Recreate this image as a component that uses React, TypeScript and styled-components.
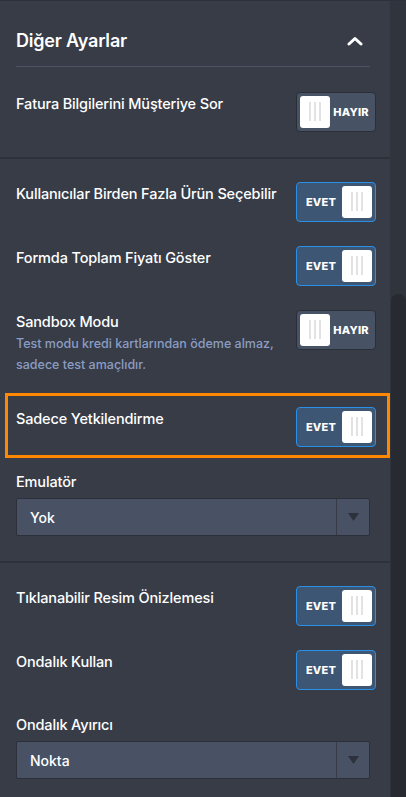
import styled, { createGlobalStyle } from "styled-components";

const GlobalStyle = createGlobalStyle`
  html, body {
    margin: 0;
    padding: 0;
    background: #373c47;
  }
  body {
    font-family: Inter, "Noto Sans", sans-serif;
    -webkit-font-smoothing: antialiased;
  }
`;

type ToggleProps = { on: boolean };

const Toggle = ({ on }: ToggleProps): JSX.Element => {
  return (
    <ToggleBox $on={on}>
      {on && <ToggleLabel>EVET</ToggleLabel>}
      <Knob>
        <Grip />
        <Grip />
        <Grip />
      </Knob>
      {!on && <ToggleLabel>HAYIR</ToggleLabel>}
    </ToggleBox>
  );
};

const Select = ({ value }: { value: string }): JSX.Element => {
  return (
    <SelectBox>
      <SelectValue>{value}</SelectValue>
      <SelectArrow>
        <svg width="11" height="8" viewBox="0 0 11 8">
          <path d="M0 0 L11 0 L5.5 8 Z" fill="#2c313b" />
        </svg>
      </SelectArrow>
    </SelectBox>
  );
};

const App = (): JSX.Element => {
  return (
    <>
      <GlobalStyle />
      <Page>
        <Panel>
          <Header>
            <Title>Diğer Ayarlar</Title>
            <svg width="16" height="10" viewBox="0 0 16 10">
              <polyline
                points="2,8 8,2.5 14,8"
                fill="none"
                stroke="#fff"
                strokeWidth="3"
                strokeLinecap="round"
                strokeLinejoin="round"
              />
            </svg>
          </Header>
          <Section $first>
            <Row>
              <Label>Fatura Bilgilerini Müşteriye Sor</Label>
              <Toggle on={false} />
            </Row>
          </Section>

          <Section>
            <Row>
              <Label>Kullanıcılar Birden Fazla Ürün Seçebilir</Label>
              <Toggle on />
            </Row>
            <Row>
              <Label>Formda Toplam Fiyatı Göster</Label>
              <Toggle on />
            </Row>
            <Row>
              <LabelGroup>
                <Label>Sandbox Modu</Label>
                <Description>
                  Test modu kredi kartlarından ödeme almaz, sadece test
                  amaçlıdır.
                </Description>
              </LabelGroup>
              <Toggle on={false} />
            </Row>
            <Row $highlight>
              <Label>Sadece Yetkilendirme</Label>
              <Toggle on />
            </Row>
            <Field>
              <Label>Emulatör</Label>
              <Select value="Yok" />
            </Field>
          </Section>

          <Section>
            <Row>
              <Label>Tıklanabilir Resim Önizlemesi</Label>
              <Toggle on />
            </Row>
            <Row>
              <Label>Ondalık Kullan</Label>
              <Toggle on />
            </Row>
            <Field>
              <Label>Ondalık Ayırıcı</Label>
              <Select value="Nokta" />
            </Field>
          </Section>
        </Panel>
        <ScrollTrack>
          <ScrollThumb />
        </ScrollTrack>
      </Page>
    </>
  );
};

const Page = styled.div`
  display: flex;
  width: 406px;
  height: 797px;
  overflow: hidden;
  border-top: 1px solid #2c3038;
`;

const Panel = styled.div`
  width: 390px;
  flex-shrink: 0;
  background: #373c47;
`;

const Header = styled.div`
  display: flex;
  align-items: center;
  justify-content: space-between;
  margin: 0 20px 0 16px;
  padding: 28px 7px 13px 0;
  border-bottom: 1px solid #4b5366;
`;

const Title = styled.h2`
  margin: 0;
  font-size: 18px;
  line-height: 24px;
  font-weight: 600;
  color: #ffffff;
  letter-spacing: -0.2px;
`;

const Section = styled.div<{ $first?: boolean }>`
  padding: ${({ $first }) => ($first ? "13px 0 13px" : "11px 0 12px")};
  border-bottom: 2px solid #2d3139;
`;

const Row = styled.div<{ $highlight?: boolean }>`
  position: relative;
  display: flex;
  align-items: flex-start;
  justify-content: space-between;
  gap: 12px;
  padding: 12px 14px 12px 16px;

  ${({ $highlight }) =>
    $highlight &&
    `
    &::after {
      content: "";
      position: absolute;
      top: -2px;
      bottom: 1px;
      left: 5px;
      right: 0;
      border: 3px solid #ff8800;
      pointer-events: none;
    }
  `}
`;

const LabelGroup = styled.div`
  flex: 1;
  padding-bottom: 8px;
`;

const Field = styled.div`
  display: flex;
  flex-direction: column;
  gap: 6px;
  padding: 11px 20px 13px 16px;
`;

const Label = styled.div`
  padding-top: 2px;
  font-size: 14.5px;
  line-height: 20px;
  font-weight: 500;
  color: #ffffff;
  letter-spacing: -0.15px;
`;

const Description = styled.div`
  margin-top: 1px;
  max-width: 272px;
  font-size: 12.5px;
  line-height: 21px;
  font-weight: 500;
  color: #8b9cc2;
`;

const ToggleBox = styled.div<{ $on: boolean }>`
  flex-shrink: 0;
  display: flex;
  align-items: center;
  box-sizing: border-box;
  width: 80px;
  height: 40px;
  padding: 0 3px;
  border-radius: 4px;
  border: ${({ $on }) => ($on ? "1px solid #2a8fe6" : "1px solid #2a2e36")};
  background: ${({ $on }) => ($on ? "#3c5674" : "#485265")};
`;

const ToggleLabel = styled.span`
  flex: 1;
  text-align: center;
  font-size: 11px;
  font-weight: 800;
  color: #ffffff;
  letter-spacing: 0.2px;
`;

const Knob = styled.div`
  display: flex;
  justify-content: center;
  gap: 3.5px;
  box-sizing: border-box;
  width: 30px;
  height: 32px;
  padding-top: 6px;
  border-radius: 3px;
  background: #ffffff;
`;

const Grip = styled.span`
  width: 1.5px;
  height: 19px;
  background: #e2e2e2;
`;

const SelectBox = styled.div`
  display: flex;
  height: 38px;
  box-sizing: border-box;
  border: 1px solid #2b3039;
  border-radius: 2px;
  background: #485264;
`;

const SelectValue = styled.div`
  flex: 1;
  display: flex;
  align-items: center;
  padding-left: 13px;
  font-size: 14px;
  font-weight: 500;
  color: #ffffff;
`;

const SelectArrow = styled.div`
  width: 32px;
  display: flex;
  align-items: center;
  justify-content: center;
  border-left: 1px solid #363b46;
`;

const ScrollTrack = styled.div`
  flex: 1;
  display: flex;
  flex-direction: column;
  justify-content: flex-end;
  background: #30343c;
`;

const ScrollThumb = styled.div`
  height: 504px;
  margin-left: 1px;
  border-radius: 7px 7px 0 0;
  background: #272a31;
`;

export default App;
